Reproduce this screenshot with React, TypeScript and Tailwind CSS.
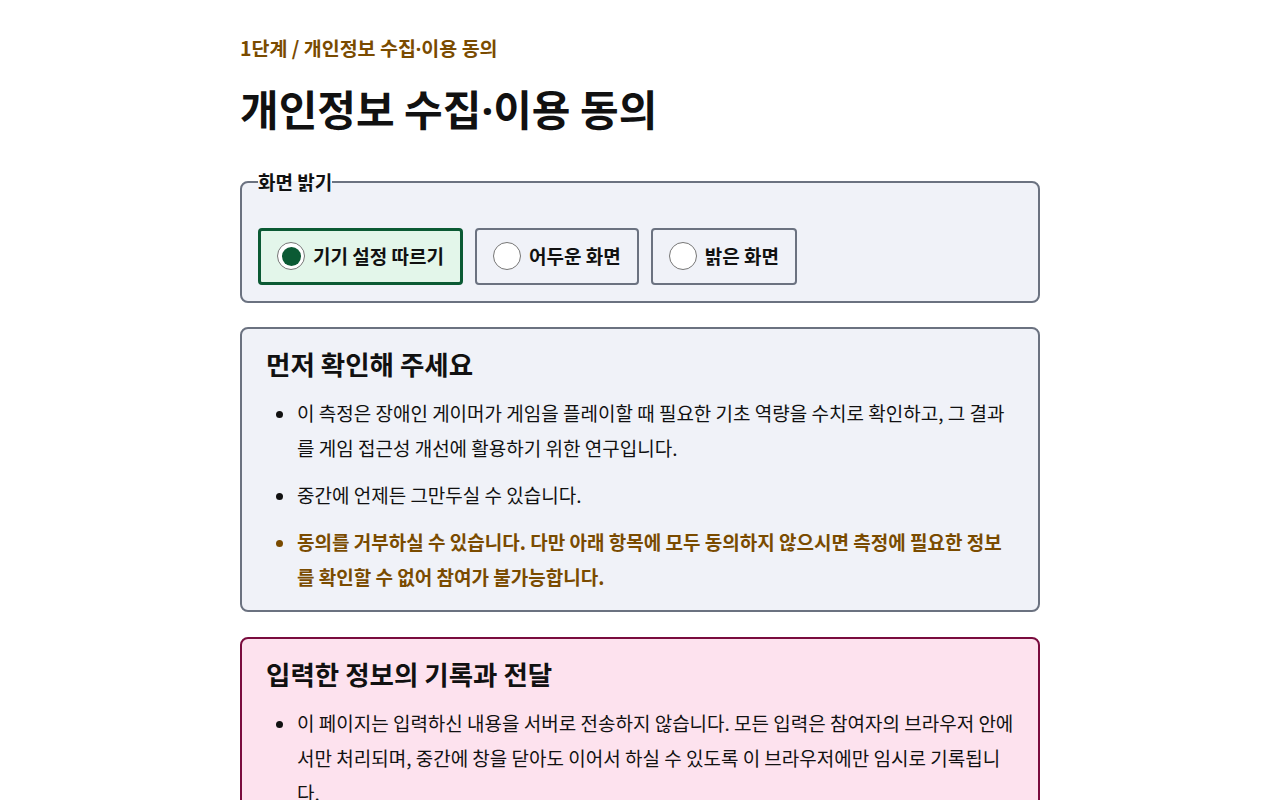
import { useState } from "react";

const themes = [
  { id: "system", label: "기기 설정 따르기" },
  { id: "dark", label: "어두운 화면" },
  { id: "light", label: "밝은 화면" },
];

// narrow middle dot between 수집 and 이용
function Dot() {
  return <span className="[font-family:'Noto_Sans',sans-serif]">·</span>;
}

export default function App() {
  const [theme, setTheme] = useState("system");

  return (
    <div className="min-h-screen bg-white text-[#111] [font-family:'Noto_Sans_CJK_KR','Noto_Sans',sans-serif]">
      <main className="mx-auto w-[800px] pt-[34px] pb-16">
        <p className="text-[19.5px] font-bold leading-[28px] text-[#7a4b00]">
          1단계 / 개인정보 수집<Dot />이용 동의
        </p>
        <h1 className="mt-[18px] text-[42px] font-bold leading-[54px]">
          개인정보 수집<Dot />이용 동의
        </h1>

        {/* Screen brightness choice */}
        <fieldset className="mt-[31px] rounded-lg border-2 border-[#6b7280] bg-[#f0f2f8] px-4 pb-4 pt-[31px]">
          <legend className="text-[19px] font-bold leading-[1.5]">화면 밝기</legend>
          <div className="flex gap-3">
            {themes.map((t) => {
              const active = theme === t.id;
              return (
                <label
                  key={t.id}
                  className={
                    active
                      ? "flex h-[57px] cursor-pointer items-center gap-2 rounded border-[3px] border-[#0b5a34] bg-[#e3f6ea] px-4"
                      : "flex h-[57px] cursor-pointer items-center gap-2 rounded border-2 border-[#6b7280] bg-[#f0f2f8] px-4"
                  }
                >
                  <input
                    type="radio"
                    name="theme"
                    className="sr-only"
                    checked={active}
                    onChange={() => setTheme(t.id)}
                  />
                  <span className="flex h-7 w-7 items-center justify-center rounded-full border border-[#767676] bg-white">
                    {active && <span className="h-[19px] w-[19px] rounded-full bg-[#0b5a34]" />}
                  </span>
                  <span className="text-[19px] font-bold">{t.label}</span>
                </label>
              );
            })}
          </div>
        </fieldset>

        <section className="mt-6 rounded-lg border-2 border-[#6b7280] bg-[#f0f2f8] px-6 py-4">
          <h2 className="mb-3 text-[26.5px] font-bold leading-[38px]">먼저 확인해 주세요</h2>
          <ul className="list-disc space-y-3 pl-[31px] text-[19px] leading-[35px]">
            <li>
              이 측정은 장애인 게이머가 게임을 플레이할 때 필요한 기초 역량을 수치로 확인하고, 그 결과를 게임 접근성 개선에 활용하기 위한 연구입니다.
            </li>
            <li>중간에 언제든 그만두실 수 있습니다.</li>
            <li className="font-bold text-[#7a4b00]">
              동의를 거부하실 수 있습니다. 다만 아래 항목에 모두 동의하지 않으시면 측정에 필요한 정보를 확인할 수 없어 참여가 불가능합니다.
            </li>
          </ul>
        </section>

        <section className="mt-[25px] rounded-lg border-2 border-[#7a0c3e] bg-[#fde2ee] px-6 py-4">
          <h2 className="mb-3 text-[26.5px] font-bold leading-[38px]">입력한 정보의 기록과 전달</h2>
          <ul className="list-disc space-y-3 pl-[31px] text-[19px] leading-[35px]">
            <li>
              이 페이지는 입력하신 내용을 서버로 전송하지 않습니다. 모든 입력은 참여자의 브라우저 안에서만 처리되며, 중간에 창을 닫아도 이어서 하실 수 있도록 이 브라우저에만 임시로 기록됩니다.
            </li>
            <li>측정이 끝나면 결과를 파일로 내려받아 연구진에게 직접 전달해 주세요.</li>
          </ul>
        </section>
      </main>
    </div>
  );
}
